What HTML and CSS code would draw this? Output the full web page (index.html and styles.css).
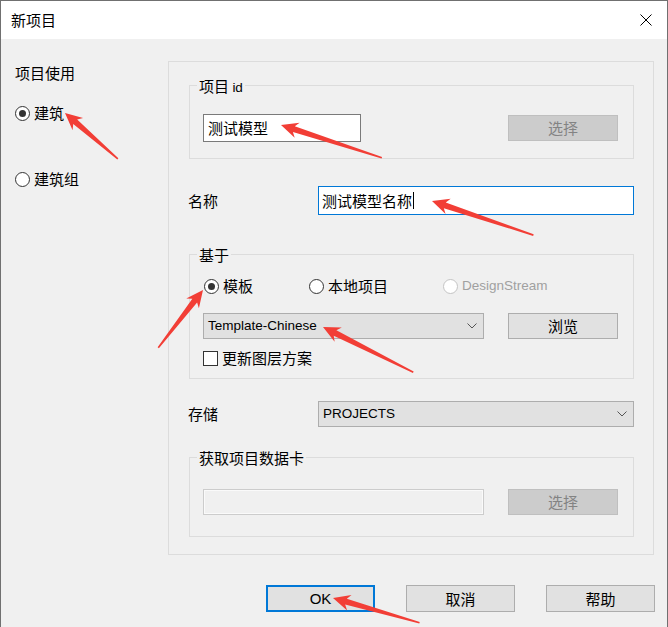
FILE: index.html
```html
<!doctype html>
<html lang="zh-CN">
  <head>
    <meta charset="UTF-8" />
    <title>新项目</title>
    <link rel="stylesheet" href="styles.css">
  </head>
  <body>
    <div class="dialog">
      <div class="titlebar">
        <span class="title">新项目</span>
        <svg class="close" width="12" height="12" viewBox="0 0 12 12">
          <path d="M0.5 0.5 L11.5 11.5 M11.5 0.5 L0.5 11.5" stroke="#000" stroke-width="1" fill="none" />
        </svg>
      </div>

      <div class="content">
        <div class="main">
          <!-- project usage -->
          <div class="side">
            <div class="side-title">项目使用</div>
            <label class="option first">
              <span class="radio checked"></span>建筑
            </label>
            <label class="option second">
              <span class="radio"></span>建筑组
            </label>
          </div>

          <div class="panel">
            <div class="group group-id">
              <div class="group-title">项目 <span class="latin">id</span></div>
              <div class="row row-id">
                <div class="textbox short">测试模型</div>
                <div class="btn disabled">选择</div>
              </div>
            </div>

            <div class="field field-name">
              <span class="label">名称</span>
              <div class="textbox focused">测试模型名称<span class="caret"></span></div>
            </div>

            <div class="group group-base">
              <div class="group-title">基于</div>
              <div class="radios">
                <label class="option"><span class="radio checked"></span>模板</label>
                <label class="option"><span class="radio"></span>本地项目</label>
                <label class="option off"><span class="radio"></span><span class="latin">DesignStream</span></label>
              </div>
              <div class="row row-template">
                <div class="combo wide">
                  <span class="latin">Template-Chinese</span>
                  <svg width="10" height="6" viewBox="0 0 10 6"><polyline points="0.5,0.5 5,5 9.5,0.5" fill="none" stroke="#555" stroke-width="1" /></svg>
                </div>
                <div class="btn">浏览</div>
              </div>
              <label class="option check-row">
                <span class="checkbox"></span>更新图层方案
              </label>
            </div>

            <div class="field field-store">
              <span class="label">存储</span>
              <div class="combo full">
                <span class="latin">PROJECTS</span>
                <svg width="10" height="6" viewBox="0 0 10 6"><polyline points="0.5,0.5 5,5 9.5,0.5" fill="none" stroke="#555" stroke-width="1" /></svg>
              </div>
            </div>

            <div class="group group-card">
              <div class="group-title">获取项目数据卡</div>
              <div class="row row-card">
                <div class="textbox blank"></div>
                <div class="btn disabled">选择</div>
              </div>
            </div>
          </div>
        </div>

        <div class="actions">
          <div class="btn default"><span class="latin">OK</span></div>
          <div class="btn">取消</div>
          <div class="btn">帮助</div>
        </div>
      </div>
    </div>

    <!-- red pointer arrows drawn on top of the dialog -->
    <svg class="marks" width="668" height="627" viewBox="0 0 668 627">
      <g fill="#f23e36">
        <polygon transform="translate(65 113) rotate(41)" points="0,0 17,-8 13.5,-3 70,-0.8 70,0.8 13.5,3 17,8" />
        <polygon transform="translate(281 125) rotate(18)" points="0,0 17,-8 13.5,-3 106,-0.8 106,0.8 13.5,3 17,8" />
        <polygon transform="translate(432 201) rotate(18.6)" points="0,0 17,-8 13.5,-3 107,-0.8 107,0.8 13.5,3 17,8" />
        <polygon transform="translate(203 290) rotate(127.8)" points="0,0 17,-8 13.5,-3 73,-0.8 73,0.8 13.5,3 17,8" />
        <polygon transform="translate(323 327) rotate(26.6)" points="0,0 17,-8 13.5,-3 101,-0.8 101,0.8 13.5,3 17,8" />
        <polygon transform="translate(333 598) rotate(16)" points="0,0 17,-8 13.5,-3 90,-0.8 90,0.8 13.5,3 17,8" />
      </g>
    </svg>
  </body>
</html>
```

FILE: styles.css
```css
:root {
  --face: #f0f0f0;
  --line: #dcdcdc;
  --btn-bg: #e1e1e1;
  --btn-border: #adadad;
  --accent: #0078d7;
  --muted: #838383;
}

* {
  margin: 0;
  padding: 0;
  box-sizing: border-box;
}

body {
  position: relative;
  width: 668px;
  height: 627px;
  overflow: hidden;
  font-family: "Noto Sans CJK SC", "Noto Sans", sans-serif;
  font-size: 15px;
  line-height: 20px;
  color: #000;
  background: var(--face);
}

/* latin runs use a narrower face */
.latin {
  font-family: "Liberation Sans", Arial, sans-serif;
  font-size: 13.5px;
}

.dialog {
  width: 668px;
  height: 627px;
  border: 1px solid #707070;
  border-bottom: none;
  background: var(--face);
}

.titlebar {
  height: 38px;
  background: #fff;
  display: flex;
  align-items: center;
  justify-content: space-between;
  padding: 0 15px 0 10px;
}

.close {
  display: block;
}

.main {
  display: flex;
}

/* left column */
.side {
  width: 167px;
  padding: 24px 0 0 14px;
}

.option {
  display: flex;
  align-items: center;
  gap: 4px;
  height: 20px;
}

.side .first {
  margin-top: 20px;
}

.side .second {
  margin-top: 46px;
}

.radio {
  position: relative;
  width: 15px;
  height: 15px;
  border: 1px solid #333;
  border-radius: 50%;
  background: #fff;
  flex: none;
}

.radio.checked::after {
  content: '';
  position: absolute;
  left: 3px;
  top: 3px;
  width: 7px;
  height: 7px;
  border-radius: 50%;
  background: #333;
}

.checkbox {
  width: 15px;
  height: 15px;
  border: 1px solid #333;
  background: #fff;
  flex: none;
}

/* right panel */
.panel {
  width: 486px;
  height: 494px;
  margin-top: 22px;
  border: 1px solid var(--line);
}

.group {
  margin: 0 19px 0 20px;
  border: 1px solid var(--line);
  padding: 0 15px 0 13px;
}

.group-title {
  width: max-content;
  margin: -10px 0 0 -6px;
  padding: 0 2px;
  background: var(--face);
}

.group-id {
  margin-top: 23px;
  padding-bottom: 16px;
}

.group-base {
  margin-top: 39px;
  padding-bottom: 10px;
}

.group-card {
  margin-top: 30px;
  padding-bottom: 21px;
}

.row {
  display: flex;
  align-items: center;
  justify-content: space-between;
}

.row-id {
  margin-top: 16px;
  height: 28px;
}

.row-template {
  margin-top: 17px;
}

.row-card {
  margin-top: 21px;
}

.radios {
  display: grid;
  grid-template-columns: 105px 134px auto;
  margin-top: 11px;
}

.radios .radio {
  margin-left: 1px;
}

.option.off {
  color: #a0a0a0;
}

.option.off .radio {
  border-color: #c4c4c4;
}

.check-row {
  margin-top: 9px;
}

.field {
  display: flex;
  align-items: center;
  justify-content: space-between;
  margin: 0 19px 0 19px;
}

.field-name {
  margin-top: 27px;
}

.field-store {
  margin-top: 22px;
}

.textbox {
  height: 28px;
  display: flex;
  align-items: center;
  padding: 0 4px;
  background: #fff;
  border: 1px solid #7a7a7a;
}

.textbox.short {
  width: 158px;
}

.textbox.focused {
  width: 316px;
  height: 29px;
  padding-left: 3px;
  border-color: var(--accent);
}

.textbox.blank {
  width: 281px;
  height: 26px;
  background: var(--face);
  border-color: #cccccc;
  box-shadow: inset 0 0 0 1px #fafafa;
}

.caret {
  display: inline-block;
  width: 1px;
  height: 17px;
  margin-left: 1px;
  background: #000;
}

.combo {
  height: 26px;
  display: flex;
  align-items: center;
  justify-content: space-between;
  padding: 0 6px 0 4px;
  background: var(--btn-bg);
  border: 1px solid var(--btn-border);
}

.combo svg {
  display: block;
}

.combo.wide {
  width: 281px;
}

.combo.full {
  width: 316px;
}

.btn {
  width: 110px;
  height: 26px;
  display: flex;
  align-items: center;
  justify-content: center;
  background: var(--btn-bg);
  border: 1px solid var(--btn-border);
}

.btn.disabled {
  background: #cccccc;
  border-color: #bfbfbf;
  color: var(--muted);
}

/* dialog buttons */
.actions {
  display: flex;
  justify-content: flex-end;
  gap: 31px;
  margin-top: 30px;
  padding-right: 12px;
}

.actions .btn {
  width: 109px;
  height: 27px;
}

.actions .latin {
  font-size: 15px;
}

.btn.default {
  border: 2px solid var(--accent);
}

.marks {
  position: absolute;
  left: 0;
  top: 0;
  pointer-events: none;
}
```
